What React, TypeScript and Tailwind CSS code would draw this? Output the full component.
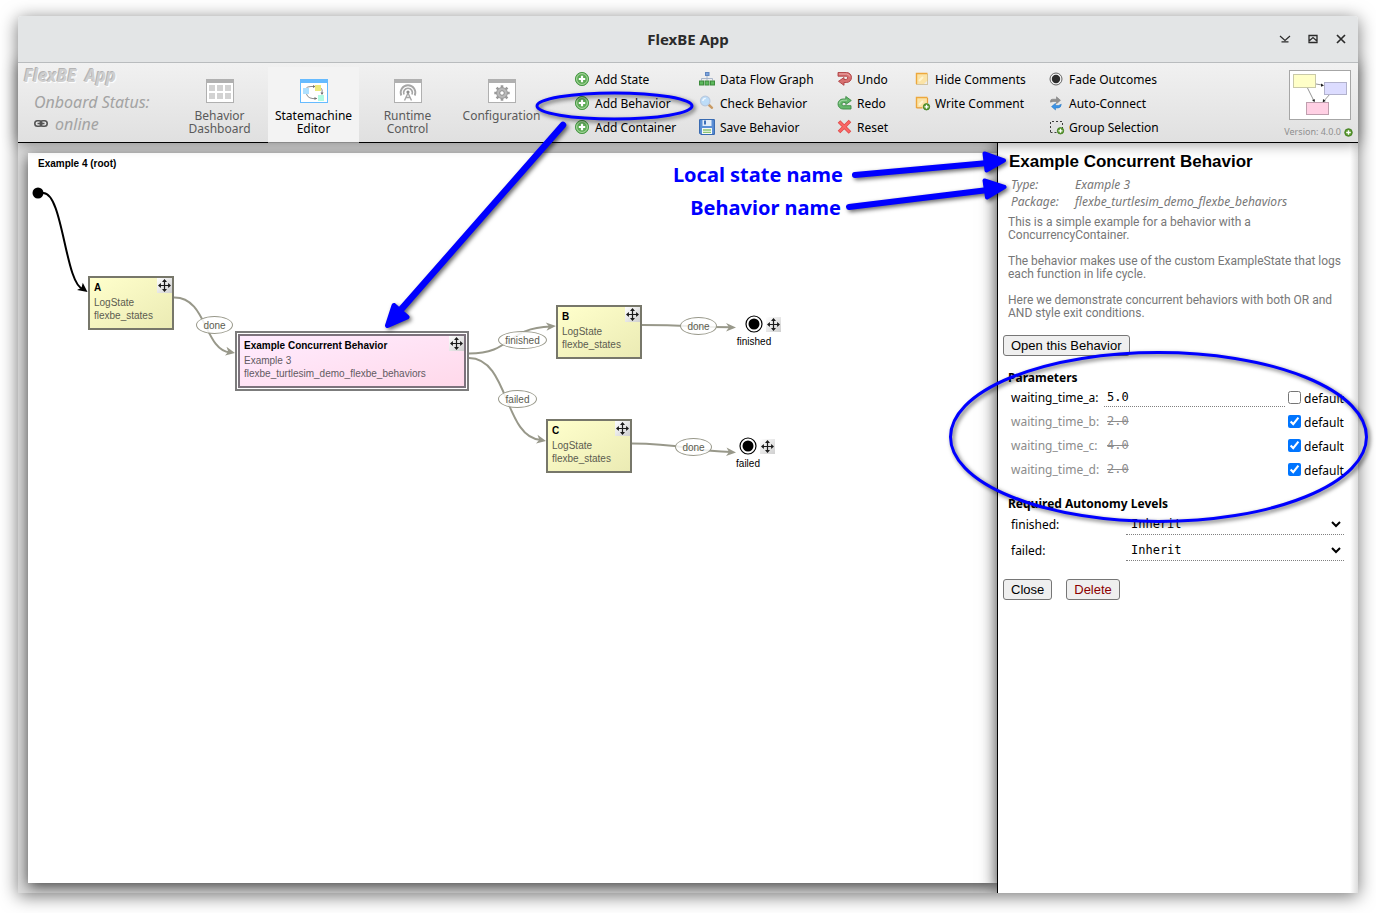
import type { ReactNode } from "react";

/* ---------- icons ---------- */

const GreenPlus = () => (
  <svg width="16" height="16" viewBox="0 0 16 16">
    <circle cx="8" cy="8" r="6.6" fill="#5cab55" stroke="#4a9a48" />
    <circle cx="8" cy="8" r="5.4" fill="none" stroke="#b8dfae" strokeWidth="0.9" />
    <path d="M8 4.8v6.4M4.8 8h6.4" stroke="#fff" strokeWidth="2.2" />
  </svg>
);

const SmallPlus = ({ size = 9 }: { size?: number }) => (
  <svg width={size} height={size} viewBox="0 0 9 9">
    <circle cx="4.5" cy="4.5" r="3.8" fill="#5b9a2f" stroke="#3c7a1c" strokeWidth="0.8" />
    <path d="M4.5 2.2v4.6M2.2 4.5h4.6" stroke="#fff" strokeWidth="1.4" />
  </svg>
);

const FlowIcon = () => (
  <svg width="16" height="16" viewBox="0 0 16 16">
    <path d="M8 4.500v3M2.500 9.500V7.500h11v2M8 7.500v2" fill="none" stroke="#a3b1c6" strokeWidth="0.900" />
    <rect x="6.500" y="1.500" width="3.500" height="3" fill="#7aa3dc" stroke="#5f86c0" />
    <rect x="0.500" y="10" width="4" height="4" fill="#5cb85c" stroke="#3c8a3c" />
    <rect x="6" y="10" width="4" height="4" fill="#5cb85c" stroke="#3c8a3c" />
    <rect x="11.500" y="10" width="4" height="4" fill="#5cb85c" stroke="#3c8a3c" />
  </svg>
);

const SearchIcon = () => (
  <svg width="16" height="16" viewBox="0 0 16 16">
    <path d="M10 10l3 2.800" stroke="#c99a63" strokeWidth="2.400" strokeLinecap="round" />
    <circle cx="6.200" cy="6" r="4.800" fill="#bcdcf8" stroke="#b9c9de" strokeWidth="1.200" />
    <path d="M3.800 6a3 3 0 0 1 3-2.600" stroke="#f2f9ff" strokeWidth="1.400" fill="none" />
  </svg>
);

const SaveIcon = () => (
  <svg width="16" height="16" viewBox="0 0 16 16">
    <path d="M.6.6h14.8v14.8H1.8L.6 14.200z" fill="#5b8fd6" stroke="#2e62ad" />
    <rect x="3.500" y="1" width="9" height="6" fill="#e4edf8" />
    <rect x="5" y="1.500" width="2" height="4" fill="#3d6fb8" />
    <rect x="3" y="9" width="10" height="6" fill="#f6faf4" />
    <path d="M4 11h8M4 13.300h8" stroke="#8cc474" strokeWidth="1.300" />
  </svg>
);

const UndoIcon = () => (
  <svg width="16" height="16" viewBox="0 0 16 16">
    <path
      d="M1 1.500h8.500a5 5 0 0 1 0 10H7v2.800L1.500 10.300 7 6.500v2h2.300a1.700 1.700 0 0 0 0-3.300H1z"
      fill="#d67070"
      stroke="#ae3f42"
      strokeWidth="0.900"
    />
    <path d="M2 3h7.500a3.600 3.600 0 0 1 3.400 2.600" fill="none" stroke="#eeb0b0" strokeWidth="0.900" />
  </svg>
);

const RedoIcon = () => (
  <svg width="16" height="16" viewBox="0 0 16 16">
    <path
      d="M14 14H6a5 5 0 0 1 0-10h2.800V1.500L14.300 5.500 8.800 9.500v-2H6.500a1.600 1.600 0 0 0 0 3.200H14z"
      fill="#66b86c"
      stroke="#3d8b45"
      strokeWidth="0.900"
    />
    <path d="M2.200 8.800A4 4 0 0 1 6 5.200h4" fill="none" stroke="#aedcaf" strokeWidth="0.900" />
  </svg>
);

const ResetIcon = () => (
  <svg width="16" height="16" viewBox="0 0 16 16">
    <path d="M2 2.500l11 11M13 2L2 13" stroke="#e04a49" strokeWidth="3.600" />
    <path d="M2.500 3l10 10M12.500 2.500L2.500 12.500" stroke="#fa6665" strokeWidth="2" />
  </svg>
);

const NoteShape = () => (
  <>
    <path d="M1.500 2.500h11v7l-3.500 3.500H1.500z" fill="#fbe3a6" />
    <path d="M1.500 13V2.500h11" stroke="#eda83c" strokeWidth="1.400" fill="none" />
    <path d="M4 10l4-4" stroke="#fff3cd" strokeWidth="2" />
  </>
);

const HideCommentIcon = () => (
  <svg width="16" height="16" viewBox="0 0 16 16">
    <NoteShape />
    <path d="M12.500 3.500V13.500H1.500" stroke="#b99a55" strokeDasharray="1 1" fill="none" />
  </svg>
);

const WriteCommentIcon = () => (
  <svg width="16" height="16" viewBox="0 0 16 16">
    <NoteShape />
    <path d="M1.500 12.800h6M12.500 3v5" stroke="#e59c38" strokeWidth="1.200" />
    <circle cx="11.500" cy="11.800" r="3.200" fill="#5b9a2f" stroke="#3c7a1c" strokeWidth="0.800" />
    <path d="M11.500 9.800v4M9.500 11.800h4" stroke="#fff" strokeWidth="1.300" />
  </svg>
);

const FadeIcon = () => (
  <svg width="16" height="16" viewBox="0 0 16 16">
    <circle cx="7" cy="8" r="6" fill="#f4f4f4" stroke="#555" strokeWidth="0.900" />
    <circle cx="7" cy="8" r="4.200" fill="#2c2c2c" />
  </svg>
);

const ConnectIcon = () => (
  <svg width="16" height="16" viewBox="0 0 16 16">
    <path d="M1.500 7.200V6Q1.500 4.200 3.500 4.200h4V1.800l4 3.500-4 3.500V6.500H4z" fill="#8f8f8f" stroke="#757575" strokeWidth="0.500" />
    <path d="M12.300 9.200Q12 13 9 13H6.500v2L2.500 11.600l4-3.300v2.200H9.500z" fill="#3a93e6" stroke="#2672bd" strokeWidth="0.500" />
  </svg>
);

const GroupIcon = () => (
  <svg width="16" height="16" viewBox="0 0 16 16">
    <path d="M1.500 13V2.500h12V9M1.500 13.500H8" fill="none" stroke="#3d3d3d" strokeDasharray="2 2" />
    <circle cx="11.500" cy="11.800" r="3.200" fill="#5b9a2f" stroke="#3c7a1c" strokeWidth="0.800" />
    <path d="M11.500 9.800v4M9.500 11.800h4" stroke="#fff" strokeWidth="1.300" />
  </svg>
);

const LinkIcon = () => (
  <svg width="14" height="10" viewBox="0 0 14 10" fill="none" stroke="#555">
    <rect x="0.800" y="1.800" width="7" height="5.400" rx="2.700" strokeWidth="1.600" />
    <rect x="6.200" y="1.800" width="7" height="5.400" rx="2.700" strokeWidth="1.600" />
    <path d="M3.500 4.500h7" strokeWidth="1.500" />
  </svg>
);

const Frame = ({ color, children }: { color: string; children: ReactNode }) => (
  <svg width="28" height="24" viewBox="0 0 28 24">
    <rect x="0.500" y="0.500" width="27" height="23" fill="#fff" stroke={color} />
    <rect width="28" height="4" fill={color} />
    {children}
  </svg>
);

const DashboardIcon = () => (
  <Frame color="#b0b0b0">
    {[3, 11, 19].map((x) =>
      [6, 14].map((y) => <rect key={`${x}-${y}`} x={x} y={y} width="6" height="6" fill="#d2d2d2" />),
    )}
  </Frame>
);

const MachineIcon = () => (
  <Frame color="#66bbff">
    <path
      d="M6 9.500Q7 7.500 11 7.500h3M20.500 8.500Q23 10 22 15M17 19.500Q8 20.500 6.500 15"
      fill="none"
      stroke="#808080"
      strokeWidth="0.900"
    />
    <path d="M13 6l2.500 1.500L13 9zM20.500 13.500h3L22 16zM14.500 18l2.500 1.500-2.500 1.500z" fill="#707070" />
    <rect x="3" y="9" width="6" height="6" fill="#aee0ff" />
    <rect x="15" y="6" width="6" height="6" fill="#ece97c" />
    <rect x="18" y="16" width="6" height="6" fill="#b0fbe2" />
  </Frame>
);

const RuntimeIcon = () => (
  <Frame color="#b0b0b0">
    <g fill="none" stroke="#a6a6a6">
      <path d="M7.300 16.500a7.300 7.300 0 1 1 13.400 0" strokeWidth="1.900" />
      <path d="M10 15.500a4.400 4.400 0 1 1 8 0" strokeWidth="1.700" />
      <path d="M14 14l-3.500 7.500M14 14l3.500 7.500M12 18.500h4" strokeWidth="1.400" />
    </g>
    <circle cx="14" cy="13" r="1.600" fill="#8c8c8c" />
  </Frame>
);

const ConfigIcon = () => (
  <Frame color="#b0b0b0">
    <g stroke="#9a9a9a" strokeWidth="2.600">
      <path d="M14 6.300v15.400M6.300 14h15.400M8.600 8.600l10.800 10.800M19.400 8.600L8.600 19.400" />
    </g>
    <circle cx="14" cy="14" r="5.400" fill="#b9b9b9" stroke="#9a9a9a" />
    <circle cx="14" cy="14" r="2.300" fill="#fff" stroke="#8c8c8c" />
  </Frame>
);

const MoveHandle = () => (
  <span className="flex size-[15px] shrink-0 items-center justify-center bg-linear-to-br from-white to-[#cfcfcf]">
    <svg width="13" height="13" viewBox="0 0 13 13">
      <path d="M6.500 1v11M1 6.500h11" stroke="#1c1c1c" strokeWidth="1.200" />
      <path
        d="M6.500 0L9 2.900H4zM6.500 13L4 10.100h5zM0 6.500L2.900 4v5zM13 6.500L10.100 9V4z"
        fill="#1c1c1c"
      />
    </svg>
  </span>
);

/* ---------- header ---------- */

const TitleBar = () => (
  <header className="relative z-20 flex h-[47px] items-center justify-center rounded-t border-b border-[#b9bcbe] bg-[#e3e5e6] text-[#2b2b2b]">
    <h1 className="text-[15px] font-bold">FlexBE App</h1>
    <div className="absolute inset-y-0 right-[11px] flex items-center gap-4">
      <button aria-label="Minimize" className="flex size-3 items-center justify-center">
        <svg width="12" height="12" viewBox="0 0 12 12" fill="none" stroke="#2b2b2b" strokeWidth="1.200">
          <path d="M1 3l5 4.500L11 3M2.500 8.800h7" />
        </svg>
      </button>
      <button aria-label="Maximize" className="flex size-3 items-center justify-center">
        <svg width="12" height="12" viewBox="0 0 12 12" fill="none" stroke="#2b2b2b" strokeWidth="1.300">
          <path d="M2 2.500h8v7H2zM1.500 8.500L6 4.500l4.500 4" />
        </svg>
      </button>
      <button aria-label="Close window" className="flex size-3 items-center justify-center">
        <svg width="12" height="12" viewBox="0 0 12 12" stroke="#2b2b2b" strokeWidth="1.700">
          <path d="M2 2l8 8M10 2l-8 8" />
        </svg>
      </button>
    </div>
  </header>
);

const tabs = [
  { label: ["Behavior", "Dashboard"], icon: <DashboardIcon />, active: false },
  { label: ["Statemachine", "Editor"], icon: <MachineIcon />, active: true },
  { label: ["Runtime", "Control"], icon: <RuntimeIcon />, active: false },
  { label: ["Configuration"], icon: <ConfigIcon />, active: false },
];

type Action = { label: string; icon: ReactNode };

const actionColumns: { width: string; gap: string; actions: Action[] }[] = [
  {
    width: "w-[125px]",
    gap: "gap-[5px]",
    actions: [
      { label: "Add State", icon: <GreenPlus /> },
      { label: "Add Behavior", icon: <GreenPlus /> },
      { label: "Add Container", icon: <GreenPlus /> },
    ],
  },
  {
    width: "w-[138px]",
    gap: "gap-[5px]",
    actions: [
      { label: "Data Flow Graph", icon: <FlowIcon /> },
      { label: "Check Behavior", icon: <SearchIcon /> },
      { label: "Save Behavior", icon: <SaveIcon /> },
    ],
  },
  {
    width: "w-[78px]",
    gap: "gap-1",
    actions: [
      { label: "Undo", icon: <UndoIcon /> },
      { label: "Redo", icon: <RedoIcon /> },
      { label: "Reset", icon: <ResetIcon /> },
    ],
  },
  {
    width: "w-[134px]",
    gap: "gap-1",
    actions: [
      { label: "Hide Comments", icon: <HideCommentIcon /> },
      { label: "Write Comment", icon: <WriteCommentIcon /> },
    ],
  },
  {
    width: "w-[110px]",
    gap: "gap-1",
    actions: [
      { label: "Fade Outcomes", icon: <FadeIcon /> },
      { label: "Auto-Connect", icon: <ConnectIcon /> },
      { label: "Group Selection", icon: <GroupIcon /> },
    ],
  },
];

const MiniMap = () => (
  <svg width="62" height="50" viewBox="0 0 62 50" className="block">
    <rect x="0.500" y="0.500" width="61" height="49" fill="#fff" stroke="#a6a6a6" />
    <g stroke="#666" strokeWidth="0.700" fill="none">
      <path d="M27 14l7 1.200M18 17l7 14M41 24l-7 8" />
    </g>
    <path d="M32 13.500l3 2-3 1.200zM23 30l3-.700-.500 3zM34 29l2.800 2-3 1.300z" fill="#222" />
    <rect x="4.500" y="4.500" width="22" height="13" fill="#ffffc8" stroke="#c9c9a8" />
    <rect x="35.500" y="12.500" width="22" height="12" fill="#dcdcff" stroke="#b2b2cc" />
    <rect x="17.500" y="32.500" width="22" height="12" fill="#ffd0e4" stroke="#bf9fae" />
  </svg>
);

const Toolbar = () => (
  <div className="relative z-10 flex h-20 border-b border-black bg-linear-to-b from-[#f1f1f1] to-[#e0e0e0] shadow-[0_0_14px_rgba(0,0,0,0.45)]">
    <div className="w-[156px] shrink-0 text-[#a3a3a3] italic">
      <div className="pt-[3px] pl-1.5 text-[17px] leading-5 font-bold whitespace-pre text-[#cfcfcf] [text-shadow:-1px_-1px_0_#b4b4b4,1px_1px_1px_#fff]">
        FlexBE  App
      </div>
      <div className="mt-1 pl-4 text-base leading-6">Onboard Status:</div>
      <div className="flex items-center gap-[7px] pl-4 text-base leading-5">
        <LinkIcon />
        online
      </div>
    </div>
    <nav className="flex shrink-0 gap-[3px] pt-1">
      {tabs.map((tab) => (
        <button
          key={tab.label[0]}
          className={
            tab.active
              ? "-mb-px flex w-[91px] flex-col items-center border-b border-[#8a8a8a] bg-[#f3f3f3] pt-3 text-[12px] leading-[13px] text-black"
              : "flex w-[91px] flex-col items-center pt-3 text-[12px] leading-[13px] text-[#5a5a5a]"
          }
        >
          {tab.icon}
          <span className="mt-1.5 block">
            {tab.label.map((line) => (
              <span key={line} className="block">
                {line}
              </span>
            ))}
          </span>
        </button>
      ))}
    </nav>
    <div className="ml-[27px] flex grow pt-[5px]">
      {actionColumns.map((column) => (
        <div key={column.actions[0].label} className={`flex shrink-0 flex-col ${column.width}`}>
          {column.actions.map((action) => (
            <button
              key={action.label}
              className={`flex h-6 items-center text-left text-[12px] whitespace-nowrap text-black [&>svg]:mb-0.5 ${column.gap}`}
            >
              {action.icon}
              {action.label}
            </button>
          ))}
        </div>
      ))}
    </div>
    <div className="flex shrink-0 flex-col items-end pt-[7px] pr-[7px]">
      <MiniMap />
      <div className="-mr-0.5 mt-1.5 flex items-center gap-[3px] text-[9px] leading-3 text-[#8f8f8f]">
        Version: 4.0.0 <SmallPlus />
      </div>
    </div>
  </div>
);

/* ---------- canvas ---------- */

type StateProps = { place: string; name: string; type: string; pkg: string };

const StateBox = ({ place, name, type, pkg }: StateProps) => (
  <div
    className={`absolute flex h-[54px] w-[86px] justify-between border-2 border-[#77776a] bg-linear-to-br from-[#ffffcc] to-[#ebebb4] pl-1 text-[10px] leading-[13px] text-[#5c5c50] ${place}`}
  >
    <div className="pt-[3px]">
      <div className="mb-0.5 font-bold text-black">{name}</div>
      <div>{type}</div>
      <div>{pkg}</div>
    </div>
    <div className="-ml-4">
      <MoveHandle />
    </div>
  </div>
);

const Outcome = ({ place, label }: { place: string; label: string }) => (
  <span
    className={`absolute flex h-[18px] items-center justify-center rounded-[50%] border border-[#98988a] bg-white/85 text-[10px] text-[#5c5c50] ${place}`}
  >
    {label}
  </span>
);

const FinalState = ({ place, label }: { place: string; label: string }) => (
  <div className={`absolute w-11 text-[10px] leading-3 text-black ${place}`}>
    <div className="flex items-center gap-[3px] pl-[9px]">
      <svg width="18" height="18" viewBox="0 0 18 18" className="shrink-0">
        <circle cx="9" cy="9" r="8" fill="#fff" stroke="#000" strokeWidth="1.200" />
        <circle cx="9" cy="9" r="5.500" fill="#000" />
      </svg>
      <MoveHandle />
    </div>
    <div className="mt-[3px] w-9 text-center">{label}</div>
  </div>
);

const Transitions = () => (
  <svg className="absolute top-0 left-0" width="760" height="340" viewBox="28 153 760 340" fill="none">
    <circle cx="38" cy="193" r="5.500" fill="#000" />
    <path d="M43 193C63 192 65 284 83 289" stroke="#000" strokeWidth="2" />
    <path d="M87.500 292l-10.500-2 4.500-2.200 1.300-5z" fill="#000" />
    <g stroke="#98988a" strokeWidth="2">
      <path d="M174 297.500C207 297 204 350 230 352.500" />
      <path d="M469 353.500C513 353.500 505 328 551 326.500" />
      <path d="M469 358C509 358 504 438 541 440" />
      <path d="M642 325C690 325 690 327 731 327.300" />
      <path d="M632 443.500C684 443.500 690 451.500 731 452" />
    </g>
    <g fill="#98988a">
      <path d="M235 353l-10 2.500 3.300-3.700-1.800-5z" />
      <path d="M556 326l-9.500 4.800 2.500-4.300-3.300-4z" />
      <path d="M546 441l-10 2.500 3.300-3.700-1.800-5z" />
      <path d="M736 327.500l-10 4 3-4.200-3-4.300z" />
      <path d="M736 452.500l-10 3.500 3-4-2.500-4.500z" />
    </g>
  </svg>
);

const Canvas = () => (
  <section className="min-w-0 grow bg-[#dedede] py-2.5 pl-2.5">
    <div className="relative h-full min-h-[400px] overflow-hidden bg-white font-['Liberation_Sans',sans-serif] shadow-[0_4px_14px_rgba(0,0,0,0.7)]">
      <h2 className="pt-[5px] pl-2.5 text-[10px] leading-3 font-bold text-black">Example 4 (root)</h2>
      <Transitions />
      <StateBox place="left-[60px] top-[123px]" name="A" type="LogState" pkg="flexbe_states" />
      <StateBox place="left-[528px] top-[152px]" name="B" type="LogState" pkg="flexbe_states" />
      <StateBox place="left-[518px] top-[266px]" name="C" type="LogState" pkg="flexbe_states" />
      <div className="absolute top-[178px] left-[207px] h-[60px] w-[234px] border-2 border-[#7c7c7c] bg-white p-px">
        <div className="flex h-full justify-between border-2 border-[#7c727c] bg-linear-to-br from-[#ffecff] to-[#ffd9ea] pl-1 text-[10px] leading-[13px] text-[#625a62]">
          <div className="pt-[3px]">
            <div className="mb-0.5 font-bold text-black">Example Concurrent Behavior</div>
            <div>Example 3</div>
            <div>flexbe_turtlesim_demo_flexbe_behaviors</div>
          </div>
          <MoveHandle />
        </div>
      </div>
      <Outcome place="left-[168px] top-[163px] w-[37px]" label="done" />
      <Outcome place="left-[470px] top-[178px] w-[49px]" label="finished" />
      <Outcome place="left-[470px] top-[237px] w-[39px]" label="failed" />
      <Outcome place="left-[652px] top-[164px] w-[37px]" label="done" />
      <Outcome place="left-[647px] top-[285px] w-[37px]" label="done" />
      <FinalState place="left-[708px] top-[162px]" label="finished" />
      <FinalState place="left-[702px] top-[284px]" label="failed" />
    </div>
  </section>
);

/* ---------- properties panel ---------- */

const parameters = [
  { name: "waiting_time_a", value: "5.0", isDefault: false },
  { name: "waiting_time_b", value: "2.0", isDefault: true },
  { name: "waiting_time_c", value: "4.0", isDefault: true },
  { name: "waiting_time_d", value: "2.0", isDefault: true },
];

const buttonClass =
  "h-[21px] rounded-[3px] border border-[#767676] bg-[#efefef] px-[7px] font-['Liberation_Sans',sans-serif] text-[13px] leading-[19px]";

const Panel = () => (
  <aside className="relative w-[361px] shrink-0 border-l border-black bg-white pt-[9px] pl-[5px] shadow-[0_0_16px_rgba(0,0,0,0.8)]">
    <h2 className="pl-1.5 font-['Liberation_Sans',sans-serif] text-[17px] leading-5 font-bold text-black">
      Example Concurrent Behavior
    </h2>
    <dl className="mt-1 grid grid-cols-[64px_1fr] pl-2 text-[12px] leading-[17px] text-[#777] italic">
      <dt>Type:</dt>
      <dd>Example 3</dd>
      <dt>Package:</dt>
      <dd>flexbe_turtlesim_demo_flexbe_behaviors</dd>
    </dl>
    <div className="mt-1.5 flex flex-col gap-[13px] pl-[5px] font-[Roboto,sans-serif] text-[12px] leading-[13px] whitespace-nowrap text-[#777]">
      <p>
        This is a simple example for a behavior with a<br />
        ConcurrencyContainer.
      </p>
      <p>
        The behavior makes use of the custom ExampleState that logs
        <br />
        each function in life cycle.
      </p>
      <p>
        Here we demonstrate concurrent behaviors with both OR and
        <br />
        AND style exit conditions.
      </p>
    </div>
    <button className={`mt-[15px] text-black ${buttonClass}`}>Open this Behavior</button>
    <h3 className="mt-[13px] pl-[5px] text-[12px] leading-[18px] font-bold text-black">Parameters</h3>
    <div className="pr-3.5 pl-2">
      {parameters.map((p) => (
        <div key={p.name} className="flex h-6 items-start text-[12px] text-black">
          <label
            htmlFor={p.name}
            className={p.isDefault ? "w-[93px] pt-px leading-5 text-[#8c8c8c]" : "w-[93px] pt-px leading-5"}
          >
            {p.name}:
          </label>
          <input
            id={p.name}
            defaultValue={p.value}
            disabled={p.isDefault}
            className={
              p.isDefault
                ? "h-5 min-w-0 grow border-b border-transparent px-[3px] font-['DejaVu_Sans_Mono',monospace] text-[12px] text-[#8c8c8c] line-through"
                : "h-5 min-w-0 grow border-b border-dotted border-[#808080] px-[3px] font-['DejaVu_Sans_Mono',monospace] text-[12px] text-black"
            }
          />
          <label className="ml-[3px] flex w-[56px] items-center gap-[3px] pt-px leading-5">
            <input type="checkbox" defaultChecked={p.isDefault} className="size-[13px] shrink-0" />
            <span className="pt-[3px] leading-4">default</span>
          </label>
        </div>
      ))}
    </div>
    <h3 className="mt-3 pl-[5px] text-[12px] leading-[18px] font-bold text-black">Required Autonomy Levels</h3>
    <div className="pr-3.5 pl-2">
      {["finished", "failed"].map((outcome) => (
        <div key={outcome} className="flex h-[26px] items-start text-[12px] text-black">
          <label htmlFor={`autonomy-${outcome}`} className="w-[115px] pt-0.5 leading-5">
            {outcome}:
          </label>
          <select
            id={`autonomy-${outcome}`}
            defaultValue="Inherit"
            className="h-[22px] min-w-0 grow border-b border-dotted border-[#808080] pl-px font-['DejaVu_Sans_Mono',monospace] text-[12px] text-black"
          >
            <option>Inherit</option>
            <option>Off</option>
            <option>Low</option>
            <option>High</option>
            <option>Full</option>
          </select>
        </div>
      ))}
    </div>
    <div className="mt-3.5 flex gap-3.5">
      <button className={`text-black ${buttonClass}`}>Close</button>
      <button className={`text-[#8b0000] ${buttonClass}`}>Delete</button>
    </div>
    <div className="pointer-events-none absolute inset-y-0 right-0 w-2 bg-linear-to-r from-transparent to-[#dcdcdc]" />
  </aside>
);

/* ---------- callouts drawn over the window ---------- */

const ToolbarCallout = () => (
  <svg
    className="pointer-events-none absolute top-0 left-0 z-20 drop-shadow-[2px_2px_2px_rgba(0,0,0,0.6)]"
    width="700"
    height="340"
    viewBox="0 0 700 340"
  >
    <ellipse cx="614.500" cy="106" rx="77.500" ry="13" fill="none" stroke="#00f" strokeWidth="3" />
    <path d="M563 125L398 313" stroke="#00f" strokeWidth="6.500" strokeLinecap="round" />
    <path d="M387.500 325.500L394 305.500l13 11.500z" fill="#00f" stroke="#00f" strokeWidth="5" strokeLinejoin="round" />
  </svg>
);

const PanelCallout = () => (
  <svg
    className="pointer-events-none absolute top-0 right-0 z-20"
    width="716"
    height="540"
    viewBox="660 0 716 540"
  >
    <g fill="#00f" fontSize="20" fontWeight="700">
      <text x="843" y="182" textAnchor="end">
        Local state name
      </text>
      <text x="841" y="215" textAnchor="end">
        Behavior name
      </text>
    </g>
    <g className="drop-shadow-[2px_2px_2px_rgba(0,0,0,0.6)]" stroke="#00f" strokeLinecap="round" strokeLinejoin="round">
      <path d="M855 175L988 163M849 207L988 190" strokeWidth="6" fill="none" />
      <path d="M1004 160.500L984.500 153.500l2 17zM1004.500 187L984.500 180.500l2.500 17z" fill="#00f" strokeWidth="4" />
      <ellipse cx="1158.500" cy="437" rx="208" ry="84.500" fill="none" strokeWidth="3" />
    </g>
  </svg>
);

export default function App() {
  return (
    <div className="relative flex min-h-screen flex-col overflow-hidden bg-white px-[18px] pt-4 pb-5 font-['Noto_Sans',sans-serif]">
      <div className="flex min-w-[1340px] grow flex-col rounded-t shadow-[0_3px_18px_rgba(0,0,0,0.55)]">
        <TitleBar />
        <Toolbar />
        <main className="flex grow overflow-hidden">
          <Canvas />
          <Panel />
        </main>
      </div>
      <ToolbarCallout />
      <PanelCallout />
    </div>
  );
}
